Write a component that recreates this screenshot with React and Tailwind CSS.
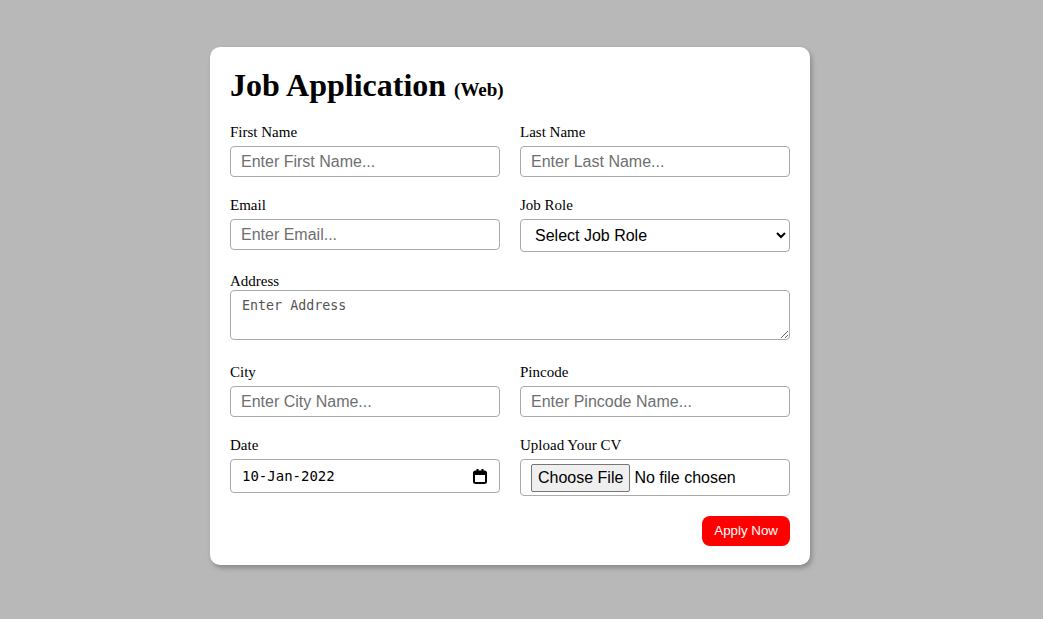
import { useState } from "react";

const inputCls =
    "block w-full h-[31px] border border-[#aaaaaa] rounded-[4px] px-[10px] text-[16px] text-black bg-white placeholder:text-[#6f6f6f] outline-none";

const sans = { fontFamily: '"Liberation Sans", Arial, sans-serif' };
const mono = { fontFamily: '"DejaVu Sans Mono", "Liberation Mono", monospace' };

function Field({ label, children, labelGap = "mb-[5px]" }) {
    return (
        <div className="flex flex-col">
            <label className={`block text-[15px] leading-[18px] ${labelGap}`}>{label}</label>
            {children}
        </div>
    );
}

export default function App() {
    const [role, setRole] = useState("");

    return (
        <div
            className="min-h-[619px] w-full bg-[#b8b8b8] pt-[47px] pl-[210px]"
            style={{ fontFamily: '"Liberation Serif", "Times New Roman", serif' }}
        >
            <div className="w-[600px] h-[518px] bg-white rounded-[10px] px-5 pt-5 pb-[19px] shadow-[2px_3px_5px_rgba(0,0,0,0.25)]">
                {/* Heading */}
                <h1 className="text-[32px] leading-[37px] font-bold text-black mb-[15px]">
                    Job Application <span className="text-[19px]">(Web)</span>
                </h1>

                <div className="grid grid-cols-2 gap-x-5">
                    <Field label="First Name">
                        <input className={inputCls} style={sans} placeholder="Enter First Name..." />
                    </Field>
                    <Field label="Last Name">
                        <input className={inputCls} style={sans} placeholder="Enter Last Name..." />
                    </Field>
                </div>

                <div className="grid grid-cols-2 gap-x-5 mt-[19px]">
                    <Field label="Email">
                        <input className={inputCls} style={sans} placeholder="Enter Email..." />
                    </Field>
                    <Field label="Job Role">
                        <select
                            value={role}
                            onChange={(e) => setRole(e.target.value)}
                            className="block w-full h-[33px] border border-[#aaaaaa] rounded-[4px] pl-[10px] pr-[4px] text-[16px] text-black bg-white outline-none"
                            style={sans}
                        >
                            <option value="">Select Job Role</option>
                            <option value="fe">Frontend Developer</option>
                            <option value="be">Backend Developer</option>
                        </select>
                    </Field>
                </div>

                <div className="mt-[20px]">
                    <Field label="Address" labelGap="mb-0">
                        <textarea
                            className="block w-full h-[50px] border border-[#aaaaaa] rounded-[4px] px-[11px] py-[7px] text-[13.33px] leading-[16px] bg-white placeholder:text-[#555555] outline-none"
                            style={mono}
                            placeholder="Enter Address"
                        />
                    </Field>
                </div>

                <div className="grid grid-cols-2 gap-x-5 mt-[23px]">
                    <Field label="City">
                        <input className={inputCls} style={sans} placeholder="Enter City Name..." />
                    </Field>
                    <Field label="Pincode">
                        <input className={inputCls} style={sans} placeholder="Enter Pincode Name..." />
                    </Field>
                </div>

                <div className="grid grid-cols-2 gap-x-5 mt-[19px] items-start">
                    <Field label="Date">
                        <div className="relative">
                            <input
                                readOnly
                                value="10-Jan-2022"
                                className="block w-full h-[34px] border border-[#aaaaaa] rounded-[4px] pl-[11px] pr-[30px] text-[14px] text-black bg-white outline-none"
                                style={mono}
                            />
                            {/* calendar icon */}
                            <svg
                                className="absolute right-[13px] top-[10px]"
                                width="14"
                                height="15"
                                viewBox="0 0 14 15"
                            >
                                <rect x="1" y="2.5" width="12" height="11.5" rx="1.5" fill="none" stroke="#000" strokeWidth="2" />
                                <rect x="1" y="2.5" width="12" height="3.5" fill="#000" />
                                <rect x="3.5" y="0" width="2" height="3" fill="#000" />
                                <rect x="8.5" y="0" width="2" height="3" fill="#000" />
                            </svg>
                        </div>
                    </Field>
                    <Field label="Upload Your CV">
                        <div className="h-[37px] border border-[#aaaaaa] rounded-[4px] bg-white flex items-center pl-[10px]">
                            <input
                                type="file"
                                className="text-[16px] text-black file:bg-[#efefef] file:border file:border-[#767676] file:rounded-[2px] file:px-[6px] file:py-[1px] file:mr-[4px] file:text-[16px] file:text-black"
                                style={sans}
                            />
                        </div>
                    </Field>
                </div>

                <div className="flex justify-end mt-[20px]">
                    <button
                        className="h-[30px] px-[12px] bg-[#ff0000] text-white text-[13.33px] rounded-[8px]"
                        style={sans}
                    >
                        Apply Now
                    </button>
                </div>
            </div>
        </div>
    );
}
